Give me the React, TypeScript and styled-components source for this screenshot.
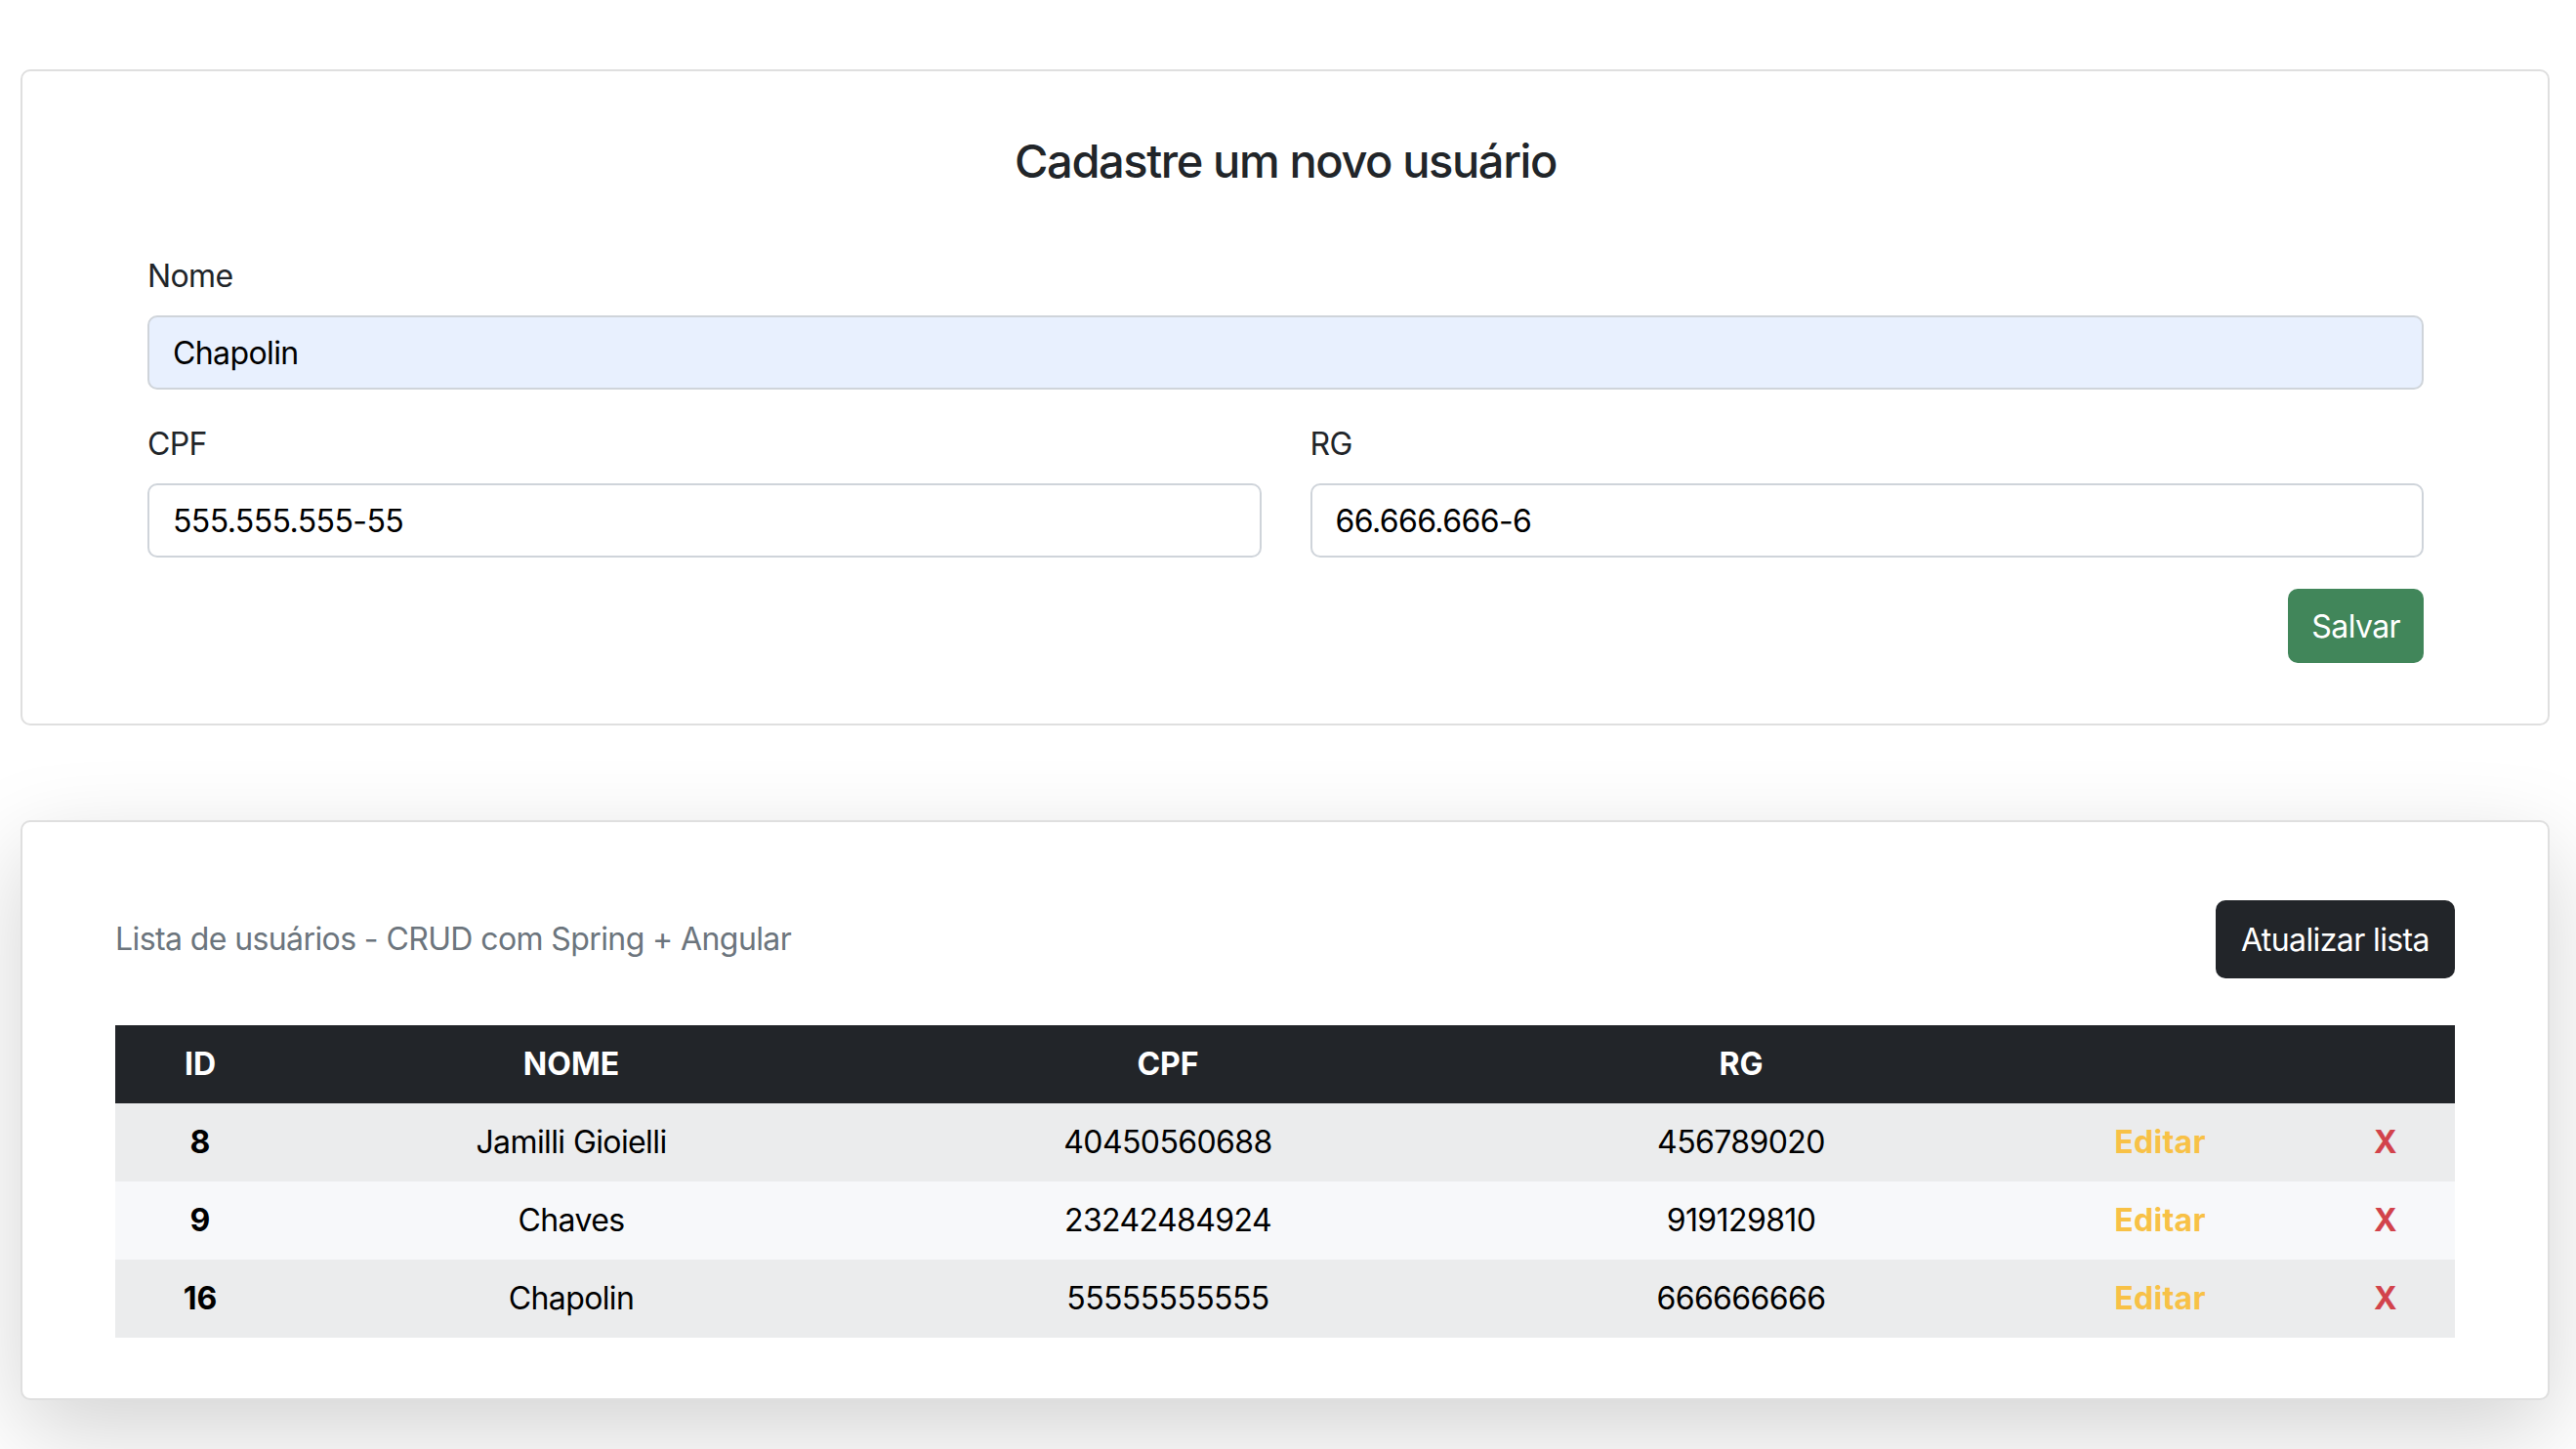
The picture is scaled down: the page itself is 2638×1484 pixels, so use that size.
import React from 'react';
import styled, { createGlobalStyle } from 'styled-components';

interface Usuario {
  id: number;
  nome: string;
  cpf: string;
  rg: string;
}

const usuarios: Usuario[] = [
  { id: 8, nome: 'Jamilli Gioielli', cpf: '40450560688', rg: '456789020' },
  { id: 9, nome: 'Chaves', cpf: '23242484924', rg: '919129810' },
  { id: 16, nome: 'Chapolin', cpf: '55555555555', rg: '666666666' },
];

const COLUMNS = [174, 586, 636, 538, 320, 142];

const GlobalStyle = createGlobalStyle`
  * {
    box-sizing: border-box;
  }
  html, body {
    margin: 0;
    padding: 0;
    background: #fff;
  }
  body {
    font-family: Inter, 'Liberation Sans', sans-serif;
    font-size: 32px;
    line-height: 1.5;
    letter-spacing: -0.6px;
    color: #212529;
  }
`;

const App = () => {
  return (
    <>
      <GlobalStyle />
      <Page>
        <FormCard>
          <Title>Cadastre um novo usuário</Title>
          <Field>
            <Label htmlFor='nome'>Nome</Label>
            <Input id='nome' defaultValue='Chapolin' $autofill />
          </Field>
          <Row>
            <Field>
              <Label htmlFor='cpf'>CPF</Label>
              <Input id='cpf' defaultValue='555.555.555-55' />
            </Field>
            <Field>
              <Label htmlFor='rg'>RG</Label>
              <Input id='rg' defaultValue='66.666.666-6' />
            </Field>
          </Row>
          <Actions>
            <Button $variant='success'>Salvar</Button>
          </Actions>
        </FormCard>

        <ListCard>
          <Toolbar>
            <Subtitle>Lista de usuários - CRUD com Spring + Angular</Subtitle>
            <Button $variant='dark' $tall>
              Atualizar lista
            </Button>
          </Toolbar>
          <Table>
            <colgroup>
              {COLUMNS.map((w, i) => (
                <col key={i} style={{ width: w }} />
              ))}
            </colgroup>
            <thead>
              <tr>
                <Th>ID</Th>
                <Th>NOME</Th>
                <Th>CPF</Th>
                <Th>RG</Th>
                <Th />
                <Th />
              </tr>
            </thead>
            <tbody>
              {usuarios.map((u, index) => (
                <Tr key={u.id} $odd={index % 2 === 0}>
                  <Td $bold>{u.id}</Td>
                  <Td>{u.nome}</Td>
                  <Td>{u.cpf}</Td>
                  <Td>{u.rg}</Td>
                  <Td>
                    <Action $tone='#f8c146'>Editar</Action>
                  </Td>
                  <Td>
                    <Action $tone='#d2434b'>X</Action>
                  </Td>
                </Tr>
              ))}
            </tbody>
          </Table>
        </ListCard>
      </Page>
    </>
  );
};

export default App;

const Page = styled.main`
  display: flex;
  flex-direction: column;
  gap: 97px;
  padding: 71px 27px 80px 21px;
`;

const Card = styled.section`
  background: #fff;
  border: 2px solid #dfdfdf;
  border-radius: 10px;
`;

const FormCard = styled(Card)`
  display: flex;
  flex-direction: column;
  padding: 62px 127px 62px 128px;
`;

const ListCard = styled(Card)`
  padding: 80px 95px 62px 95px;
  box-shadow: 0 32px 96px rgba(0, 0, 0, 0.175);
`;

const Title = styled.h4`
  margin: 0 0 64px;
  font-size: 47px;
  line-height: 60px;
  font-weight: 500;
  letter-spacing: -1.4px;
  text-align: center;
  color: #212529;
`;

const Field = styled.div`
  display: flex;
  flex-direction: column;
  gap: 16px;
  margin-bottom: 32px;
`;

const Row = styled.div`
  display: grid;
  grid-template-columns: 1fr 1fr;
  column-gap: 50px;
`;

const Label = styled.label`
  font-size: 32px;
  line-height: 48px;
  color: #212529;
`;

interface InputProps {
  $autofill?: boolean;
}

const Input = styled.input<InputProps>`
  height: 76px;
  padding: 12px 24px;
  font-family: inherit;
  font-size: 32px;
  letter-spacing: -0.6px;
  color: #000;
  background: ${props => (props.$autofill ? '#e8f0fe' : '#fff')};
  border: 2px solid #cfd4da;
  border-radius: 10px;
  outline: none;
`;

const Actions = styled.div`
  display: flex;
  justify-content: flex-end;
`;

interface ButtonProps {
  $variant: 'success' | 'dark';
  $tall?: boolean;
}

const Button = styled.button<ButtonProps>`
  height: ${props => (props.$tall ? 80 : 76)}px;
  padding: 0 ${props => (props.$tall ? 26 : 24)}px;
  font-family: inherit;
  font-size: 32px;
  letter-spacing: -0.6px;
  color: #fff;
  background: ${props => (props.$variant === 'success' ? '#41865a' : '#222529')};
  border: none;
  border-radius: 10px;
  cursor: pointer;
`;

const Toolbar = styled.div`
  display: flex;
  align-items: center;
  justify-content: space-between;
  margin-bottom: 48px;
`;

const Subtitle = styled.p`
  margin: 0;
  font-size: 32px;
  color: #6c757d;
`;

const Table = styled.table`
  width: 100%;
  table-layout: fixed;
  border-collapse: collapse;
`;

const Th = styled.th`
  height: 80px;
  padding: 16px;
  font-weight: 700;
  letter-spacing: 0;
  text-align: center;
  color: #fff;
  background: #222529;
`;

const Tr = styled.tr<{ $odd: boolean }>`
  background: ${props => (props.$odd ? '#ebeced' : '#f7f8fa')};
`;

const Td = styled.td<{ $bold?: boolean }>`
  height: 80px;
  padding: 16px;
  text-align: center;
  color: #000;
  font-weight: ${props => (props.$bold ? 700 : 400)};
  letter-spacing: ${props => (props.$bold ? '0' : '-0.6px')};
`;

const Action = styled.span<{ $tone: string }>`
  font-weight: 700;
  letter-spacing: 0.3px;
  color: ${props => props.$tone};
  cursor: pointer;
`;
